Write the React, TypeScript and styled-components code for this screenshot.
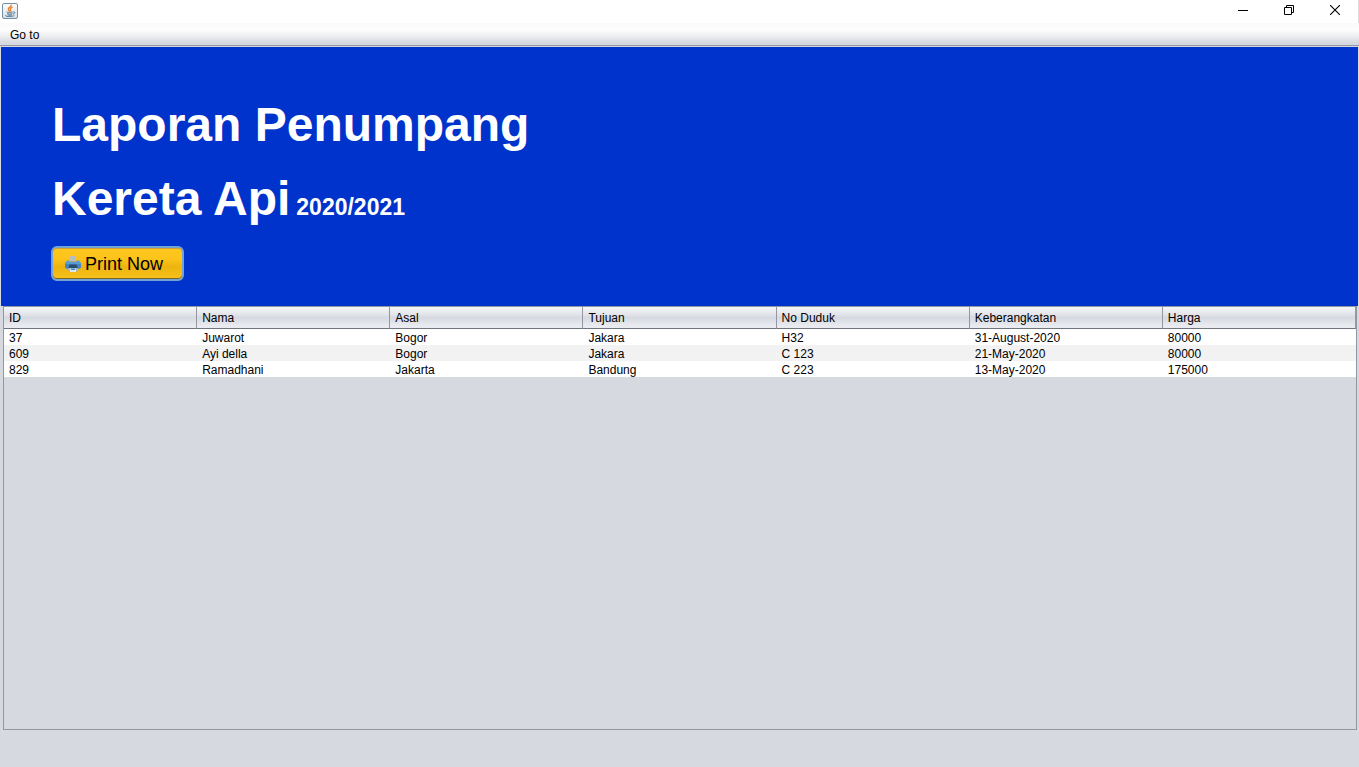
import React from "react";
import styled, { createGlobalStyle } from "styled-components";

const GlobalStyle = createGlobalStyle`
  *, *::before, *::after { box-sizing: border-box; }
  body {
    margin: 0;
    font-family: "Liberation Sans", Arial, sans-serif;
    font-size: 12px;
    color: #000;
    background: #d6d9e0;
  }
`;

const Window = styled.div`
  display: flex;
  flex-direction: column;
  min-height: 100vh;
  background: #d6d9e0;
`;

const TitleBar = styled.header`
  display: flex;
  align-items: flex-start;
  justify-content: space-between;
  height: 23px;
  padding-left: 2px;
  border-right: 1px solid #dcdcdc;
  background: #fff;
`;

const AppIcon = styled.svg`
  display: block;
  width: 16px;
  height: 16px;
  margin-top: 3px;
`;

const WindowControls = styled.div`
  display: flex;
`;

const ControlButton = styled.button`
  display: flex;
  align-items: center;
  justify-content: center;
  width: 46px;
  height: 20px;
  padding: 0;
  border: 0;
  background: transparent;

  svg {
    display: block;
  }
`;

const MenuBar = styled.nav`
  display: flex;
  align-items: center;
  height: 24px;
  padding: 0 5px;
  border-bottom: 1px solid #d6d9e0;
  background: linear-gradient(#fafafb, #fdfdfd 30%, #ebecf0 60%, #d6d9e0 85%);
  box-shadow: inset 0 -1px 0 #9297a1;
`;

const MenuItem = styled.button`
  height: 20px;
  padding: 0 5px;
  border: 0;
  background: transparent;
  font: inherit;
  color: #000;
`;

const Banner = styled.section`
  margin: 0 1px;
  padding: 41px 51px 25px;
  background: #0033cc;
  color: #fff;
`;

const Title = styled.h1`
  margin: 0;
  font-size: 48px;
  line-height: 74px;
  font-weight: bold;
`;

const TitleLine = styled.span`
  display: flex;
  align-items: baseline;
  gap: 6px;
`;

const Period = styled.small`
  font-size: 23px;
  line-height: 28px;
`;

const PrintButton = styled.button`
  display: flex;
  align-items: center;
  gap: 4px;
  height: 35px;
  margin-top: 10px;
  margin-left: -1px;
  padding: 0 19px 0 12px;
  border: 2px solid #73a4d1;
  border-radius: 6px;
  background: linear-gradient(#ffc81e, #fcc31a 35%, #edb40f 60%, #f7c01c);
  box-shadow: inset 0 -1px 0 #7a6526, inset 0 1px 0 #cda13a;
  font-family: inherit;
  font-size: 18px;
  line-height: 20px;
  color: #000;
  white-space: nowrap;
`;

const TablePane = styled.main`
  flex: 1;
  margin: 0 2px 37px 3px;
  border: 1px solid #9297a1;
`;

const Table = styled.table`
  width: 100%;
  table-layout: fixed;
  border-collapse: separate;
  border-spacing: 0;
  line-height: 14px;
`;

const HeaderCell = styled.th`
  height: 22px;
  padding: 0 5px;
  border-right: 1px solid #9297a1;
  border-bottom: 1px solid #70747d;
  background: linear-gradient(#f5f6f8, #e3e5ea 35%, #d6d9e0 50%, #e9ebf0 90%);
  font-weight: normal;
  text-align: left;
`;

const BodyRow = styled.tr`
  background: #fff;

  &:nth-child(even) {
    background: #f2f2f2;
  }
`;

const BodyCell = styled.td`
  height: 16px;
  padding: 2px 5px 0;
`;

const columns = ["ID", "Nama", "Asal", "Tujuan", "No Duduk", "Keberangkatan", "Harga"];

const passengers = [
  ["37", "Juwarot", "Bogor", "Jakara", "H32", "31-August-2020", "80000"],
  ["609", "Ayi della", "Bogor", "Jakara", "C 123", "21-May-2020", "80000"],
  ["829", "Ramadhani", "Jakarta", "Bandung", "C 223", "13-May-2020", "175000"],
];

const JavaIcon = () => (
  <AppIcon viewBox="0 0 16 16" aria-hidden="true">
    <defs>
      <linearGradient id="tile" x1="0" y1="0" x2="0" y2="1">
        <stop offset="0" stopColor="#ffffff" />
        <stop offset="1" stopColor="#d5dde5" />
      </linearGradient>
    </defs>
    <rect x="0.5" y="0.5" width="15" height="15" rx="1.5" fill="url(#tile)" stroke="#7590a6" />
    <path d="M9.3 1.8c.8 1.6-3 2.5-3 4.2 0 1 .9 1.5 1.3 2.4M10.6 4.2C8.6 5 7.8 5.7 8.5 6.7c.5.7.3 1.1-.3 1.7" fill="none" stroke="#ee7c25" strokeWidth="1.3" />
    <path d="M4.8 8.8c-.7.8 5 .8 6 .1M5.2 10.4c0 1 4.4.9 5.2.2M11.3 8.9c2-.6 2 1.6-.3 2.2M3.6 12.3c-1.2 1.5 7.6 1.5 8.7.1M5.6 11.8c.8.5 3.4.5 4.4 0" fill="none" stroke="#4e7896" strokeWidth="1" />
  </AppIcon>
);

const PrinterIcon = () => (
  <svg width="16" height="16" viewBox="0 0 16 16" aria-hidden="true">
    <path d="M5 0h6v5H5z" fill="#b9bdc2" />
    <path d="M2 4.5h2.5v1h7v-1H14L16 7v4l-1 1.5H1L0 11V7z" fill="#5b9bd5" />
    <path d="M0 8h16v3l-1 1.5H1L0 11z" fill="#4585c4" />
    <path d="M4.5 8.5h7l1.3 3.5H3.2z" fill="#2d4d6e" />
    <path d="M3 12h10l-.5 2.5-1 1h-7l-1-1z" fill="#8bb9e4" />
    <path d="M5 12.5h6V16H5z" fill="#dce6ef" />
    <path d="M6 12.5h4v1.5H6z" fill="#4c85bf" />
  </svg>
);

export default function App() {
  return (
    <Window>
      <GlobalStyle />
      <TitleBar>
        <JavaIcon />
        <WindowControls>
          <ControlButton type="button" aria-label="Minimize">
            <svg width="10" height="10" viewBox="0 0 10 10">
              <path d="M0 5.5h10" stroke="#000" />
            </svg>
          </ControlButton>
          <ControlButton type="button" aria-label="Restore">
            <svg width="10" height="10" viewBox="0 0 10 10">
              <path d="M.5 2.5h7v7h-7zM2.5 2.5v-2h7v7h-2" fill="none" stroke="#000" />
            </svg>
          </ControlButton>
          <ControlButton type="button" aria-label="Close">
            <svg width="10" height="10" viewBox="0 0 10 10">
              <path d="M0 0l10 10M10 0L0 10" stroke="#000" strokeWidth="1.1" />
            </svg>
          </ControlButton>
        </WindowControls>
      </TitleBar>
      <MenuBar>
        <MenuItem type="button">Go to</MenuItem>
      </MenuBar>
      <Banner>
        <Title>
          <TitleLine>Laporan Penumpang</TitleLine>
          <TitleLine>
            Kereta Api <Period>2020/2021</Period>
          </TitleLine>
        </Title>
        <PrintButton type="button">
          <PrinterIcon />
          Print Now
        </PrintButton>
      </Banner>
      <TablePane>
        <Table>
          <thead>
            <tr>
              {columns.map((name) => (
                <HeaderCell key={name} scope="col">{name}</HeaderCell>
              ))}
            </tr>
          </thead>
          <tbody>
            {passengers.map((row) => (
              <BodyRow key={row[0]}>
                {row.map((value, i) => (
                  <BodyCell key={columns[i]}>{value}</BodyCell>
                ))}
              </BodyRow>
            ))}
          </tbody>
        </Table>
      </TablePane>
    </Window>
  );
}
